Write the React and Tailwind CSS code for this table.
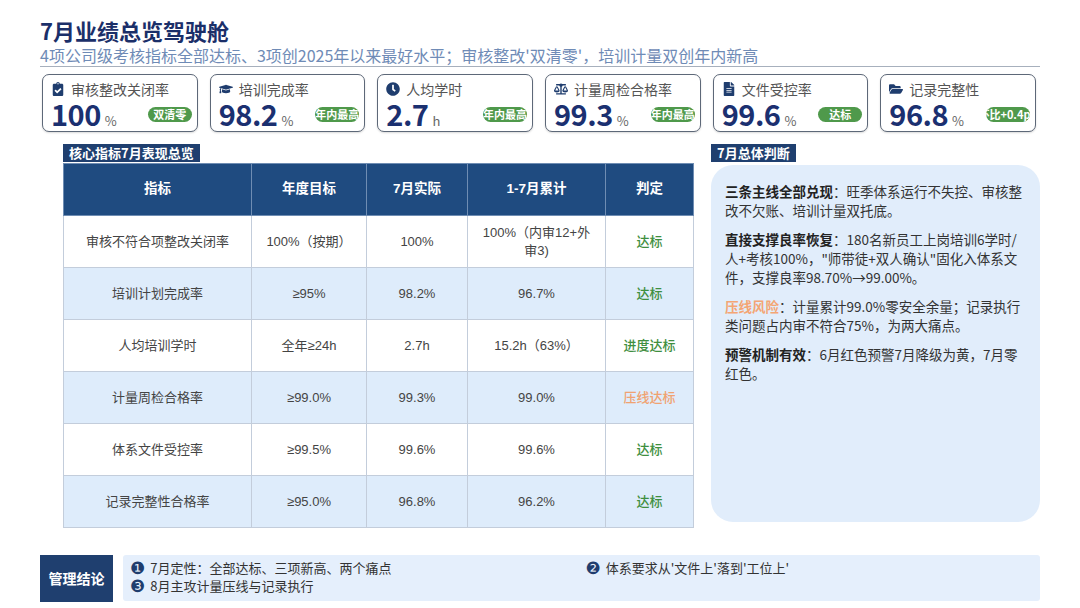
import {
  FaClipboardCheck,
  FaGraduationCap,
  FaClock,
  FaBalanceScale,
  FaFileAlt,
  FaFolderOpen,
} from "react-icons/fa";

const kpis = [
  { icon: FaClipboardCheck, label: "审核整改关闭率", value: "100", unit: "%", badge: "双清零" },
  { icon: FaGraduationCap, label: "培训完成率", value: "98.2", unit: "%", badge: "年内最高" },
  { icon: FaClock, label: "人均学时", value: "2.7", unit: "h", badge: "年内最高" },
  { icon: FaBalanceScale, label: "计量周检合格率", value: "99.3", unit: "%", badge: "年内最高" },
  { icon: FaFileAlt, label: "文件受控率", value: "99.6", unit: "%", badge: "达标" },
  { icon: FaFolderOpen, label: "记录完整性", value: "96.8", unit: "%", badge: "环比+0.4pp" },
];

const rows = [
  ["审核不符合项整改关闭率", "100%（按期）", "100%", "100%（内审12+外审3)", "达标"],
  ["培训计划完成率", "≥95%", "98.2%", "96.7%", "达标"],
  ["人均培训学时", "全年≥24h", "2.7h", "15.2h（63%）", "进度达标"],
  ["计量周检合格率", "≥99.0%", "99.3%", "99.0%", "压线达标"],
  ["体系文件受控率", "≥99.5%", "99.6%", "99.6%", "达标"],
  ["记录完整性合格率", "≥95.0%", "96.8%", "96.2%", "达标"],
];

const font = { fontFamily: '"Noto Sans CJK SC", "Noto Sans", sans-serif' };
const tableFont = { fontFamily: '"Liberation Sans", "Noto Sans CJK SC", sans-serif' };
const dingbat = { fontFamily: '"DejaVu Sans", sans-serif' };

function KpiCard({ item }) {
  const Icon = item.icon;
  return (
    <div className="h-[58px] rounded-[7px] border-[1.5px] border-[#5d6878] bg-white shadow-[0_1px_2px_rgba(0,0,0,0.15)] pl-[8px] pr-[5px] pt-[5px]">
      <div className="flex items-center gap-[6px] h-[18px]">
        <Icon className="text-[#1f3d6e] w-[14px] h-[14px] shrink-0" />
        <span className="text-[14px] leading-[18px] text-[#555]">{item.label}</span>
      </div>
      <div className="flex items-end justify-between">
        <div className="flex items-baseline h-[30px]">
          <span className="text-[29px] leading-[30px] font-bold text-[#1b3070] tracking-[-0.5px]">{item.value}</span>
          <span className="text-[13px] leading-[16px] text-[#666] ml-[4px]">{item.unit}</span>
        </div>
        <span className="mb-[6px] w-[44px] h-[15px] rounded-full bg-[#4f994b] text-white text-[11px] leading-[15px] font-bold flex justify-center overflow-hidden whitespace-nowrap">
          {item.badge}
        </span>
      </div>
    </div>
  );
}

export default function App() {
  return (
    <div className="w-[1080px] h-[608px] bg-white overflow-hidden text-[#333]" style={font}>
      <div className="px-[40px] pt-[16px]">
        <h1 className="text-[22px] leading-[29px] font-bold text-[#1b2f69]">7月业绩总览驾驶舱</h1>
        <p className="text-[16px] leading-[20px] text-[#6f8bb6] border-b-[1.5px] border-[#a7b0bd] pb-[1px]">
          4项公司级考核指标全部达标、3项创2025年以来最好水平；审核整改'双清零'，培训计量双创年内新高
        </p>
      </div>

      <div className="ml-[42px] w-[994px] mt-[7px] grid grid-cols-6 gap-[12px]">
        {kpis.map((k) => (
          <KpiCard key={k.label} item={k} />
        ))}
      </div>

      <div className="flex pl-[63px] mt-[12px] gap-[18px]">
        <div className="w-[630px]">
          <div className="w-fit bg-[#1f3f6f] text-white text-[13px] font-bold leading-[18px] h-[18px] px-[6px]">
            核心指标7月表现总览
          </div>
          <table
            className="mt-[1px] w-[630px] border-collapse table-fixed text-[13px] text-[#444]"
            style={tableFont}
          >
            <colgroup>
              <col className="w-[188px]" />
              <col className="w-[115px]" />
              <col className="w-[101px]" />
              <col className="w-[138px]" />
              <col className="w-[88px]" />
            </colgroup>
            <thead>
              <tr className="h-[52px] bg-[#1f4b80] text-white text-[13.5px] font-bold">
                {["指标", "年度目标", "7月实际", "1-7月累计", "判定"].map((h) => (
                  <th key={h} className="border border-[#6f8db3] font-bold">
                    {h}
                  </th>
                ))}
              </tr>
            </thead>
            <tbody>
              {rows.map((r, i) => (
                <tr key={r[0]} className={i % 2 === 1 ? "h-[52px] bg-[#deecfb]" : "h-[52px] bg-white"}>
                  {r.slice(0, 4).map((c, j) => (
                    <td key={j} className="border border-[#c3cddb] text-center leading-[18px] px-[10px]">
                      {c}
                    </td>
                  ))}
                  <td
                    className={
                      r[4] === "压线达标"
                        ? "border border-[#c3cddb] text-center font-medium text-[#f0a271]"
                        : "border border-[#c3cddb] text-center font-medium text-[#3f8f3f]"
                    }
                  >
                    {r[4]}
                  </td>
                </tr>
              ))}
            </tbody>
          </table>
        </div>

        <div className="w-[329px]">
          <div className="w-fit bg-[#1f3f6f] text-white text-[13px] font-bold leading-[18px] h-[18px] px-[6px]">
            7月总体判断
          </div>
          <div className="mt-[3px] h-[357px] rounded-[22px] bg-[#e1edfb] pl-[14px] pr-[14px] pt-[17px] text-[13.5px] leading-[19px] text-[#333] flex flex-col gap-[10px]">
            <p>
              <b className="text-[#222]">三条主线全部兑现</b>：旺季体系运行不失控、审核整改不欠账、培训计量双托底。
            </p>
            <p>
              <b className="text-[#222]">直接支撑良率恢复</b>：180名新员工上岗培训6学时/人+考核100%，"师带徒+双人确认"固化入体系文件，支撑良率98.70%→99.00%。
            </p>
            <p>
              <b className="text-[#f4a574]">压线风险</b>：计量累计99.0%零安全余量；记录执行类问题占内审不符合75%，为两大痛点。
            </p>
            <p>
              <b className="text-[#222]">预警机制有效</b>：6月红色预警7月降级为黄，7月零红色。
            </p>
          </div>
        </div>
      </div>

      <div className="flex px-[40px] mt-[27px] gap-[10px]">
        <div className="w-[73px] h-[47px] bg-[#1f3f6f] text-white text-[14px] font-bold flex items-center justify-center">
          管理结论
        </div>
        <div className="flex-1 h-[46px] bg-[#e5effc] rounded-[3px] px-[7px] pt-[4px] grid grid-cols-2 content-start text-[13px] leading-[18px] text-[#333]">
          <div className="flex items-center gap-[5px]">
            <span className="text-[#1f3d6e] text-[17px] leading-[18px]" style={dingbat}>❶</span>
            <span>7月定性：全部达标、三项新高、两个痛点</span>
          </div>
          <div className="flex items-center gap-[5px] pl-[4px]">
            <span className="text-[#1f3d6e] text-[17px] leading-[18px]" style={dingbat}>❷</span>
            <span>体系要求从'文件上'落到'工位上'</span>
          </div>
          <div className="flex items-center gap-[5px]">
            <span className="text-[#1f3d6e] text-[17px] leading-[18px]" style={dingbat}>❸</span>
            <span>8月主攻计量压线与记录执行</span>
          </div>
        </div>
      </div>
    </div>
  );
}
